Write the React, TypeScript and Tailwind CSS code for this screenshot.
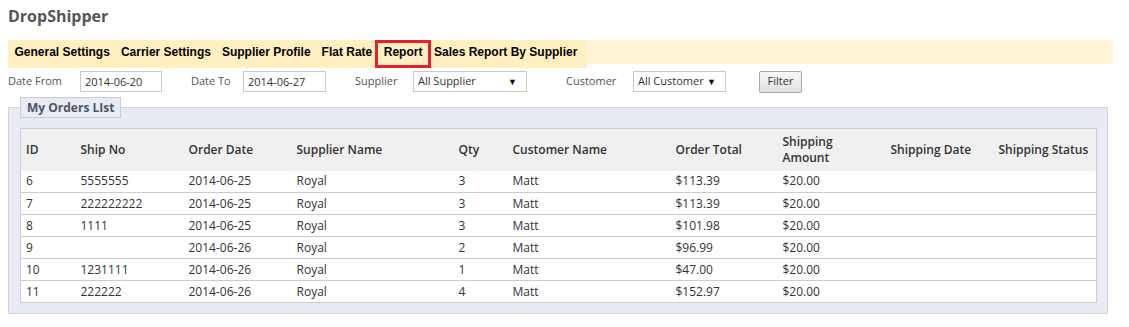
const columns = [
  { label: "ID", w: "w-[55px]" },
  { label: "Ship No", w: "w-[108px]" },
  { label: "Order Date", w: "w-[108px]" },
  { label: "Supplier Name", w: "w-[162px]" },
  { label: "Qty", w: "w-[54px]" },
  { label: "Customer Name", w: "w-[163px]" },
  { label: "Order Total", w: "w-[107px]" },
  { label: "Shipping Amount", w: "w-[108px]" },
  { label: "Shipping Date", w: "w-[108px]" },
  { label: "Shipping Status", w: "w-[103px]" },
]

const orders = [
  ["6", "5555555", "2014-06-25", "Royal", "3", "Matt", "$113.39", "$20.00", "", ""],
  ["7", "222222222", "2014-06-25", "Royal", "3", "Matt", "$113.39", "$20.00", "", ""],
  ["8", "1111", "2014-06-25", "Royal", "3", "Matt", "$101.98", "$20.00", "", ""],
  ["9", "", "2014-06-26", "Royal", "2", "Matt", "$96.99", "$20.00", "", ""],
  ["10", "1231111", "2014-06-26", "Royal", "1", "Matt", "$47.00", "$20.00", "", ""],
  ["11", "222222", "2014-06-26", "Royal", "4", "Matt", "$152.97", "$20.00", "", ""],
]

const navItems = ["General Settings", "Carrier Settings", "Supplier Profile", "Flat Rate", "Report", "Sales Report By Supplier"]

function TextBox({ value, w }: { value: string; w: string }) {
  return (
    <div className={`${w} h-[21px] border border-[#c8c8c8] bg-white px-[4px] text-[11px] leading-[19px] text-[#333] whitespace-nowrap`}>
      {value}
    </div>
  )
}

function SelectBox({ value, w }: { value: string; w: string }) {
  return (
    <div className={`${w} h-[21px] border border-[#c8c8c8] bg-white pl-[4px] pr-[9px] flex items-center justify-between text-[11px] text-[#333] whitespace-nowrap`}>
      <span>{value}</span>
      <span className="text-[9px] text-black">▼</span>
    </div>
  )
}

export default function App() {
  return (
    <div className="w-[1129px] h-[327px] bg-white font-['Open_Sans',sans-serif] overflow-hidden">
      <div className="px-[8px] pt-[4px]">
        {/* Page title */}
        <h1 className="text-[16px] font-bold text-[#555] leading-[24px] h-[36px]">DropShipper</h1>

        {/* Nav bar */}
        <div className="w-[1105px] h-[24px] flex items-start bg-[#fff5d6] font-['Liberation_Sans',Arial,sans-serif] text-[12px] font-bold text-black">
          <div className="flex items-start bg-[#ffefc1] pl-[1px] pr-[4px]">
            {navItems.map((item) =>
              item === "Report" ? (
                <div
                  key={item}
                  className="h-[28px] -mx-[3px] border-[3px] border-[#e8202a] px-[6px] leading-[18px] relative z-10"
                >
                  {item}
                </div>
              ) : (
                <div key={item} className="h-[24px] px-[5.5px] leading-[24px]">
                  {item}
                </div>
              )
            )}
          </div>
        </div>

        {/* Filters */}
        <div className="flex items-center mt-[7px] h-[21px] text-[11px] text-[#555]">
          <span className="w-[72px]">Date From</span>
          <TextBox value="2014-06-20" w="w-[82px]" />
          <span className="ml-[29px] w-[52px]">Date To</span>
          <TextBox value="2014-06-27" w="w-[83px]" />
          <span className="ml-[29px] w-[58px]">Supplier</span>
          <SelectBox value="All Supplier" w="w-[114px]" />
          <span className="ml-[39px] w-[67px]">Customer</span>
          <SelectBox value="All Customer" w="w-[93px]" />
          <button className="ml-[33px] h-[22px] w-[43px] border border-[#a9a9a9] rounded-[2px] bg-gradient-to-b from-[#f8f8f8] to-[#e2e2e2] text-[11px] text-[#333]">
            Filter
          </button>
        </div>

        {/* Orders fieldset */}
        <fieldset className="mt-[5px] w-[1100px] border border-[#cfd2da] bg-[#e8ebf3] pl-[11px] pr-[10px] pb-[10px] pt-[10px]">
          <legend className="border border-[#c8ccd4] bg-[#e8ebf3] px-[6px] text-[12px] font-bold leading-[19px] text-[#4d5566]">
            My Orders LIst
          </legend>
          <table className="w-[1076px] table-fixed border-collapse border border-[#cccccc] bg-white text-[12px] text-[#333]">
            <thead>
              <tr className="bg-[#f0f0f0]">
                {columns.map((c) => (
                  <th key={c.label} className={`${c.w} h-[42px] px-[5px] text-left align-middle text-[12px] font-semibold leading-[16px] text-[#333]`}>
                    {c.label}
                  </th>
                ))}
              </tr>
            </thead>
            <tbody>
              {orders.map((row, i) => (
                <tr key={i} className={i > 0 ? "border-t border-[#cccccc]" : ""}>
                  {row.map((cell, j) => (
                    <td key={j} className="h-[22px] p-0 px-[5px] leading-[16px] align-middle">
                      {cell}
                    </td>
                  ))}
                </tr>
              ))}
            </tbody>
          </table>
        </fieldset>
      </div>
    </div>
  )
}
